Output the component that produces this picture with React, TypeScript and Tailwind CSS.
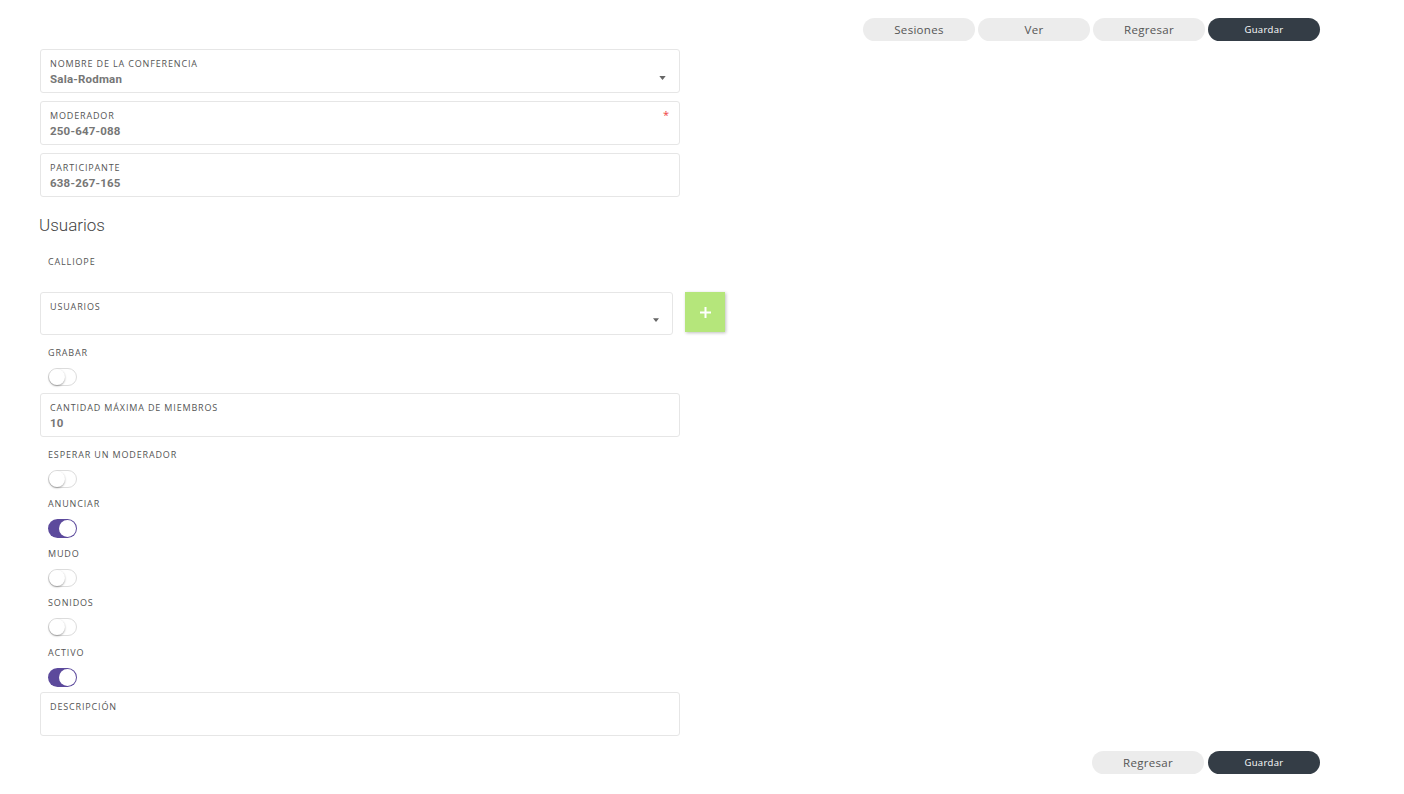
import React from 'react';

const labelCls = "block text-[9px] leading-[12px] tracking-[0.85px] uppercase text-[#555]";
const labelFont = { fontFamily: '"Open Sans", "Liberation Sans", sans-serif' };

function Field({ label, value, required, caret }: { label: string; value?: string; required?: boolean; caret?: boolean }) {
  return (
    <div className="relative h-[44px] w-[640px] rounded-[3px] border border-[#e6e6e6] bg-white px-[9px] pt-[8px]">
      <span className={labelCls} style={labelFont}>{label}</span>
      {value && (
        <div className="mt-[2px] text-[11.5px] font-bold leading-[14px] tracking-[0.2px] text-[#767676]" style={{ fontFamily: 'Roboto, "Liberation Sans", sans-serif' }}>
          {value}
        </div>
      )}
      {required && <span className="absolute right-[10px] top-[5px] text-[11px] text-[#f05050]">*</span>}
      {caret && (
        <svg className="absolute right-[13px] top-[26px]" width="7" height="4" viewBox="0 0 8 5">
          <path d="M0 0h8L4 5z" fill="#666" />
        </svg>
      )}
    </div>
  );
}

function Toggle({ on }: { on?: boolean }) {
  if (on) {
    return (
      <div className="flex h-[19px] w-[29px] items-center justify-end rounded-full bg-[#5c4a9c] pr-[1px]">
        <div className="h-[17px] w-[17px] rounded-full bg-white" />
      </div>
    );
  }
  return (
    <div className="flex h-[18px] w-[29px] items-center rounded-full border border-[#dcdcdc] bg-white">
      <div className="h-[16px] w-[16px] rounded-full bg-white shadow-[0_1px_2px_rgba(0,0,0,0.35)]" />
    </div>
  );
}

function ToggleRow({ label, on, top }: { label: string; on?: boolean; top: string }) {
  return (
    <div className={`${top} pl-[8px]`}>
      <span className={labelCls} style={labelFont}>{label}</span>
      <div className="mt-[9px]">
        <Toggle on={on} />
      </div>
    </div>
  );
}

function Btn({ children, dark }: { children: React.ReactNode; dark?: boolean }) {
  return (
    <button
      className={
        dark
          ? "flex h-[23px] w-[112px] items-center justify-center rounded-full bg-[#343d46] pt-[1px] text-[9.5px] leading-[12px] tracking-[0.3px] text-white"
          : "flex h-[23px] w-[112px] items-center justify-center rounded-full bg-[#ececec] text-[11.5px] leading-[14px] tracking-[0.3px] text-[#555]"
      }
      style={labelFont}
    >
      {children}
    </button>
  );
}

export default function App() {
  return (
    <div className="min-h-screen w-[1404px] bg-white pl-[40px] pt-[18px]">
      <div className="flex justify-end gap-[3px] pr-[84px]">
        <Btn>Sesiones</Btn>
        <Btn>Ver</Btn>
        <Btn>Regresar</Btn>
        <Btn dark>Guardar</Btn>
      </div>

      <div className="mt-[8px] flex flex-col gap-[8px]">
        <Field label="Nombre de la conferencia" value="Sala-Rodman" caret />
        <Field label="Moderador" value="250-647-088" required />
        <Field label="Participante" value="638-267-165" />
      </div>

      <h2 className="-ml-[1px] mt-[16px] text-[17px] font-light leading-[24px] text-[#444]" style={{ fontFamily: 'Roboto, "Liberation Sans", sans-serif' }}>
        Usuarios
      </h2>

      <div className="mt-[19px] pl-[8px]">
        <span className={labelCls} style={labelFont}>Calliope</span>
      </div>

      <div className="mt-[24px] flex items-start gap-[12px]">
        <div className="relative h-[43px] w-[633px] rounded-[3px] border border-[#e6e6e6] bg-white px-[9px] pt-[8px]">
          <span className={labelCls} style={labelFont}>Usuarios</span>
          <svg className="absolute right-[13px] top-[25px]" width="6" height="4" viewBox="0 0 8 5">
            <path d="M0 0h8L4 5z" fill="#666" />
          </svg>
        </div>
        <button className="flex h-[40px] w-[40px] items-center justify-center bg-[#b5e67b] shadow-[1px_1px_3px_rgba(0,0,0,0.25)]">
          <svg width="11" height="11" viewBox="0 0 11 11">
            <path d="M5.5 0v11M0 5.5h11" stroke="#fff" strokeWidth="2" />
          </svg>
        </button>
      </div>

      <ToggleRow label="Grabar" top="mt-[12px]" />

      <div className="mt-[7px]">
        <Field label="Cantidad máxima de miembros" value="10" />
      </div>

      <ToggleRow label="Esperar un moderador" top="mt-[12px]" />
      <ToggleRow label="Anunciar" on top="mt-[10px]" />
      <ToggleRow label="Mudo" top="mt-[10px]" />
      <ToggleRow label="Sonidos" top="mt-[10px]" />
      <ToggleRow label="Activo" on top="mt-[11px]" />

      <div className="mt-[5px]">
        <Field label="Descripción" />
      </div>

      <div className="mt-[15px] flex justify-end gap-[4px] pb-[19px] pr-[84px]">
        <Btn>Regresar</Btn>
        <Btn dark>Guardar</Btn>
      </div>
    </div>
  );
}
